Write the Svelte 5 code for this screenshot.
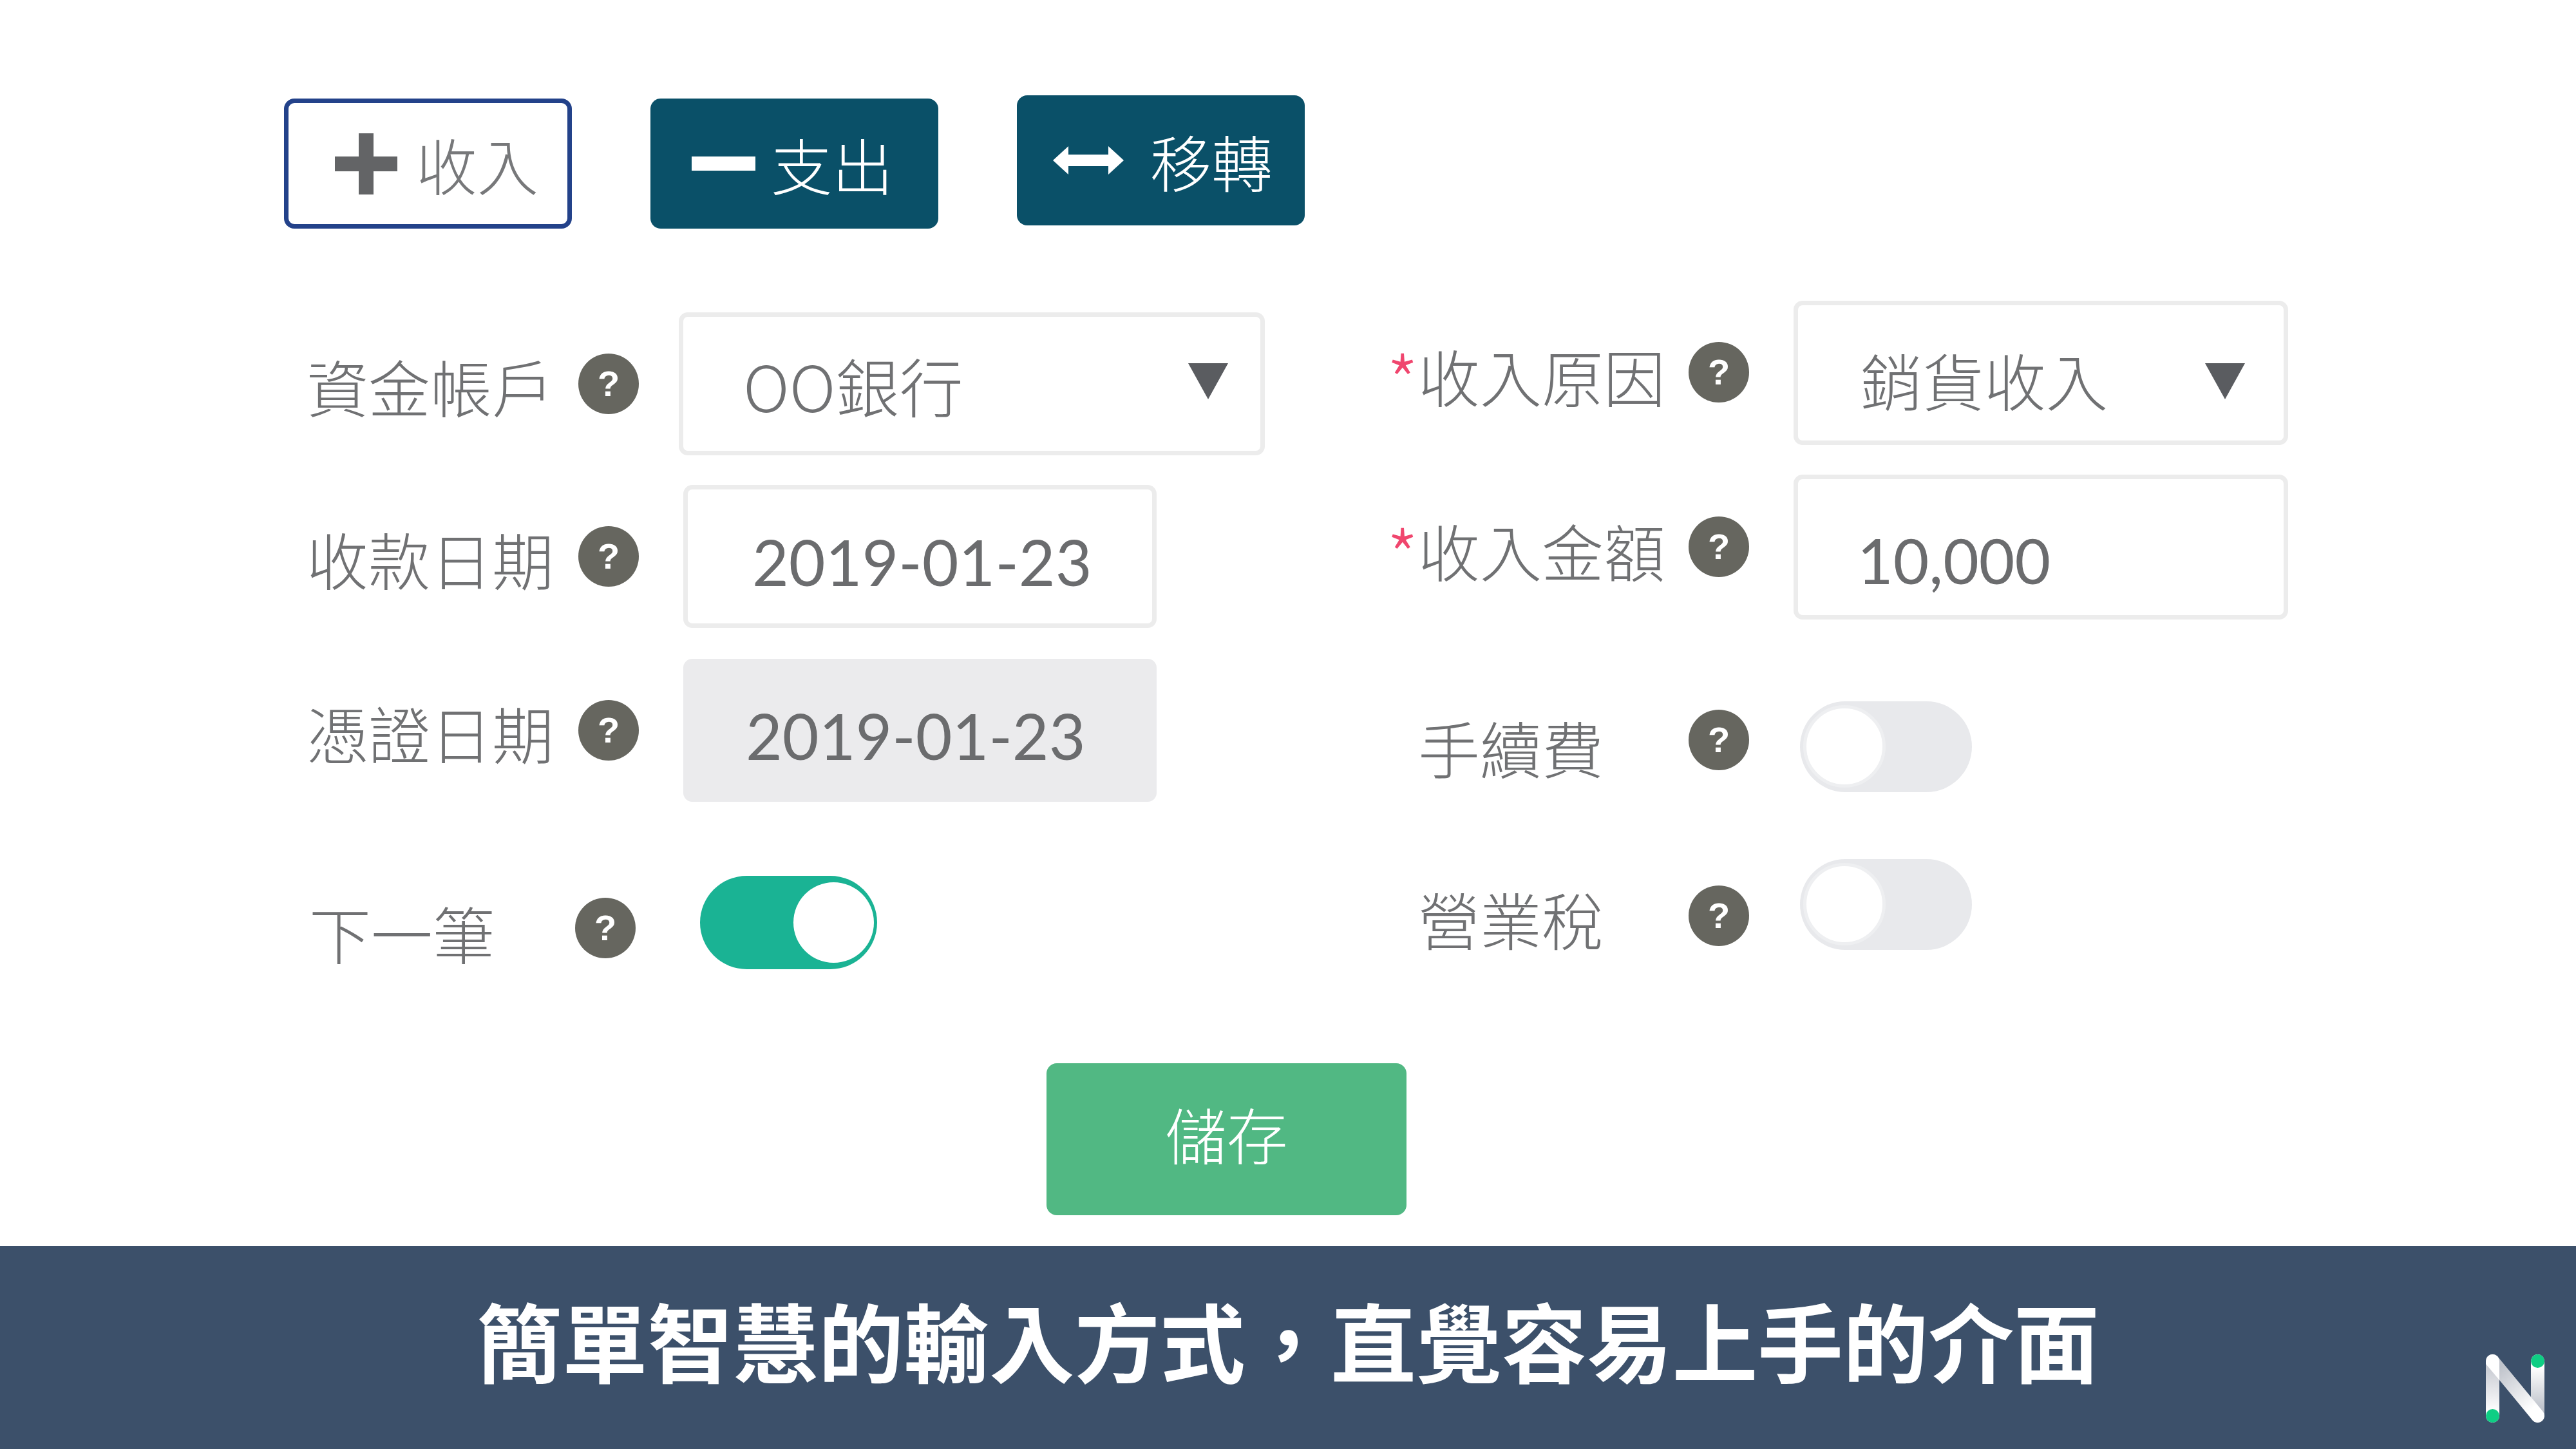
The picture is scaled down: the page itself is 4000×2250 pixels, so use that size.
<script>
  const green = "#0fce84";
</script>

{#snippet help(cls = "")}
  <span class="help {cls}">?</span>
{/snippet}

{#snippet caret()}
  <svg class="caret" viewBox="0 0 62 56"><path d="M0 0H62L31 56Z" /></svg>
{/snippet}

<div class="page">
  <main>
    <div class="tabs">
      <button class="tab income">
        <svg class="tab-icon plus" viewBox="0 0 97 95"><path d="M37 0H60V36H97V59H60V95H37V59H0V36H37Z" /></svg>
        <span>收入</span>
      </button>
      <button class="tab expense">
        <svg class="tab-icon minus" viewBox="0 0 99 22"><path d="M0 0H99V22H0Z" /></svg>
        <span>支出</span>
      </button>
      <button class="tab transfer">
        <svg class="tab-icon arrows" viewBox="0 0 110 44"><path d="M0 22L24 0V13H86V0L110 22L86 44V31H24V44Z" /></svg>
        <span>移轉</span>
      </button>
    </div>

    <div class="form">
      <div class="col left">
        <div class="row r1">
          <span class="label">資金帳戶</span>
          {@render help()}
          <div class="box select wide"><span class="value bank">OO銀行</span>{@render caret()}</div>
        </div>
        <div class="row r2">
          <span class="label">收款日期</span>
          {@render help()}
          <div class="box date"><span class="value num">2019-01-23</span></div>
        </div>
        <div class="row r3">
          <span class="label">憑證日期</span>
          {@render help()}
          <div class="box date disabled"><span class="value num">2019-01-23</span></div>
        </div>
        <div class="row r4">
          <span class="label next">下一筆</span>
          {@render help("help-next")}
          <span class="toggle on"><span class="knob"></span></span>
        </div>
      </div>

      <div class="col right">
        <div class="row rr1">
          <span class="star">*</span>
          <span class="label">收入原因</span>
          {@render help("help-up")}
          <div class="box select reason"><span class="value">銷貨收入</span>{@render caret()}</div>
        </div>
        <div class="row rr2">
          <span class="star">*</span>
          <span class="label">收入金額</span>
          {@render help("help-up")}
          <div class="box amount"><span class="value num">10,000</span></div>
        </div>
        <div class="row rr3">
          <span class="label short">手續費</span>
          {@render help("help-fee")}
          <span class="toggle off"><span class="knob"></span></span>
        </div>
        <div class="row rr4">
          <span class="label short tax">營業稅</span>
          {@render help("help-tax")}
          <span class="toggle off"><span class="knob"></span></span>
        </div>
      </div>
    </div>

    <button class="save">儲存</button>
  </main>

  <footer>
    <span class="slogan">簡單智慧的輸入方式&#xFF0C;直覺容易上手的介面</span>
    <svg class="logo" viewBox="0 0 91 106">
      <defs>
        <linearGradient id="barLeft" gradientUnits="userSpaceOnUse" x1="0" y1="20" x2="0" y2="90">
          <stop offset="0" stop-color="#c9ccd3" />
          <stop offset="1" stop-color="#ffffff" />
        </linearGradient>
        <linearGradient id="barRight" gradientUnits="userSpaceOnUse" x1="0" y1="20" x2="0" y2="90">
          <stop offset="0" stop-color="#ffffff" />
          <stop offset="1" stop-color="#b9bec7" />
        </linearGradient>
        <linearGradient id="barMid" gradientUnits="userSpaceOnUse" x1="20" y1="22" x2="72" y2="85">
          <stop offset="0" stop-color="#bfc3cb" />
          <stop offset="1" stop-color="#ffffff" />
        </linearGradient>
      </defs>
      <path d="M10.5 10.5V95.5" fill="none" stroke="url(#barLeft)" stroke-width="21" stroke-linecap="round" />
      <path d="M80.5 10.5V95.5" fill="none" stroke="url(#barRight)" stroke-width="21" stroke-linecap="round" />
      <path d="M10.5 10.5L80.5 95.5" fill="none" stroke="url(#barMid)" stroke-width="21" stroke-linecap="round" />
      <path d="M0 10.5A10.5 10.5 0 0 1 21 10.5V40L0 15Z" fill="#fff" />
      <circle cx="10.5" cy="95.5" r="10.5" fill={green} />
      <circle cx="80.5" cy="10.5" r="10.5" fill={green} />
    </svg>
  </footer>
</div>

<style>
  :global(body) {
    margin: 0;
    background: #fff;
  }

  .page {
    width: 4000px;
    height: 2250px;
    display: flex;
    flex-direction: column;
    font-family: "Noto Sans CJK TC", "Noto Sans", sans-serif;
    font-weight: 300;
    color: #707173;
  }

  main {
    flex: 1;
    display: flex;
    flex-direction: column;
    padding-top: 148px;
  }

  button {
    font: inherit;
    padding: 0;
    margin: 0;
    cursor: pointer;
  }

  .tabs {
    display: flex;
    align-items: flex-start;
    margin-left: 441px;
    height: 319px;
  }

  .tab {
    width: 447px;
    height: 202px;
    border: none;
    border-radius: 16px;
    display: flex;
    align-items: center;
    font-size: 95px;
    line-height: 1;
    background: #0a5068;
    color: #fff;
  }

  .tab-icon {
    flex: none;
  }

  .income {
    background: #fff;
    border: 7px solid #23428a;
    box-sizing: border-box;
    color: #77787a;
    margin-top: 5px;
    padding-left: 72px;
  }

  .plus {
    width: 97px;
    height: 95px;
    fill: #636466;
    margin-right: 29px;
  }

  .expense {
    margin-top: 5px;
    margin-left: 122px;
    padding-left: 64px;
  }

  .minus {
    width: 99px;
    height: 22px;
    fill: #fff;
    margin-right: 24px;
  }

  .transfer {
    margin-left: 122px;
    padding-left: 56px;
  }

  .arrows {
    width: 110px;
    height: 44px;
    fill: #fff;
    margin-right: 41px;
  }

  .form {
    display: flex;
    align-items: flex-start;
    height: 1038px;
  }

  .col {
    display: flex;
    flex-direction: column;
  }

  .left {
    width: 1680px;
    margin-left: 480px;
    margin-top: 18px;
  }

  .right {
    width: 1394px;
  }

  .row {
    display: flex;
    align-items: center;
    font-size: 96px;
    line-height: 1;
  }

  .r1 {
    height: 222px;
  }

  .r2 {
    height: 222px;
    margin-top: 46px;
  }

  .r3 {
    height: 222px;
    margin-top: 48px;
  }

  .r4 {
    height: 145px;
    margin-top: 115px;
  }

  .rr1 {
    height: 224px;
  }

  .rr2 {
    height: 225px;
    margin-top: 46px;
  }

  .rr3 {
    height: 141px;
    margin-top: 127px;
  }

  .rr4 {
    height: 141px;
    margin-top: 104px;
  }

  .label {
    width: 376px;
    flex: none;
    margin-top: 6px;
    margin-left: -4px;
    margin-right: 4px;
    white-space: nowrap;
  }

  .right .label {
    width: 378px;
    margin-top: 8px;
    margin-left: -2px;
    margin-right: 2px;
  }

  .star {
    color: #f0466e;
    width: 44px;
    flex: none;
    font-size: 112px;
    line-height: 1;
    margin-top: 18px;
    margin-left: -7px;
    margin-right: 7px;
  }

  .right .short {
    width: 282px;
    margin-left: 42px;
    margin-right: 138px;
    margin-top: 0;
  }

  .right .short.tax {
    margin-top: 42px;
  }

  .label.next {
    width: 283px;
    margin-left: 0;
    margin-top: 30px;
    margin-right: 130px;
  }

  .help {
    width: 94px;
    height: 94px;
    flex: none;
    border-radius: 50%;
    background: #66665f;
    color: #fff;
    margin-left: 42px;
    font-family: "Liberation Sans", sans-serif;
    font-weight: 700;
    font-size: 56px;
    line-height: 94px;
    text-align: center;
  }

  .right .help {
    margin-left: 40px;
  }

  .help-next {
    margin-left: 0;
    margin-top: 16px;
  }

  .help-up {
    margin-top: -2px;
  }

  .right .help-fee {
    margin-left: 0;
    margin-top: -21px;
  }

  .right .help-tax {
    margin-left: 0;
    margin-top: 34px;
  }

  .box {
    box-sizing: border-box;
    height: 100%;
    border: 7px solid #ececec;
    border-radius: 14px;
    display: flex;
    align-items: center;
    background: #fff;
    flex: none;
  }

  .value {
    font-size: 96px;
    white-space: nowrap;
  }

  .bank {
    font-size: 99px;
    margin-top: 2px;
  }

  .reason .value {
    margin-top: 20px;
  }

  .num {
    font-family: Lato, sans-serif;
    font-size: 98px;
    font-weight: 400;
    color: #6b6c6e;
    margin-top: 16px;
  }

  .select {
    position: relative;
    width: 768px;
    margin-left: 69px;
    padding-left: 97px;
  }

  .wide {
    width: 910px;
    margin-left: 62px;
    padding-left: 93px;
  }

  .caret {
    position: absolute;
    right: 50px;
    top: 72px;
    width: 62px;
    height: 56px;
    fill: #5a5c60;
  }

  .reason .caret {
    right: 60px;
    top: 90px;
  }

  .date {
    width: 735px;
    margin-left: 69px;
    padding-left: 100px;
  }

  .date.disabled {
    background: #ebebed;
    border-color: #ebebed;
    padding-left: 90px;
  }

  .amount {
    width: 768px;
    margin-left: 69px;
    padding-left: 92px;
  }

  .amount .num {
    margin-top: 40px;
    font-size: 96px;
  }

  .toggle {
    display: block;
    flex: none;
    position: relative;
    border-radius: 80px;
    box-sizing: border-box;
  }

  .toggle.on {
    width: 275px;
    height: 145px;
    background: #1ab394;
    margin-left: 100px;
  }

  .toggle.on .knob {
    right: 5px;
    top: 10px;
    width: 125px;
    height: 125px;
  }

  .toggle.off {
    width: 267px;
    height: 141px;
    background: #e8e9ec;
    margin-left: 79px;
  }

  .toggle.off .knob {
    left: 5px;
    top: 6px;
    width: 128px;
    height: 128px;
    border: 5px solid #eeeff1;
    box-sizing: border-box;
  }

  .knob {
    position: absolute;
    border-radius: 50%;
    background: #fff;
  }

  .save {
    width: 559px;
    height: 236px;
    margin-left: 1625px;
    margin-top: 146px;
    padding-bottom: 20px;
    border: none;
    border-radius: 16px;
    background: #51b883;
    color: #fff;
    font-size: 95px;
    line-height: 1;
  }

  footer {
    height: 315px;
    position: relative;
    background: #3c506a;
    display: flex;
    align-items: center;
    justify-content: center;
  }

  .slogan {
    font-size: 132.6px;
    font-weight: 700;
    line-height: 1;
    color: #fff;
    white-space: nowrap;
    margin-bottom: 26px;
  }

  .logo {
    position: absolute;
    left: 3860px;
    top: 168px;
    width: 91px;
    height: 106px;
  }
</style>
